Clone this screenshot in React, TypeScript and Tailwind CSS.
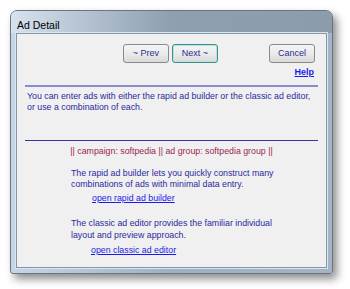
import React from 'react';

const font = { fontFamily: '"Liberation Sans", Arial, sans-serif' };

const WinButton = ({ label, focused = false }: { label: string; focused?: boolean }) => (
  <button
    className={`w-[46px] h-[19px] rounded-[3px] border text-[9px] leading-none text-[#2b2b8f] bg-gradient-to-b from-[#f4f4f4] via-[#ebebeb] to-[#d9d9d9] ${
      focused ? 'border-[#3e8e8a] shadow-[inset_0_0_0_1px_#b9e2e0]' : 'border-[#8a8a8a]'
    }`}
  >
    {label}
  </button>
);

export default function App() {
  return (
    <div className="w-[350px] h-[289px] bg-white overflow-hidden pt-[10px] pl-[10px]" style={font}>
      <div className="w-[323px] h-[264px] rounded-t-[7px] rounded-b-[3px] border border-[#6b7480] bg-gradient-to-r from-[#c7d6e4] via-[#9eb0c2] to-[#a5b4c4] shadow-[4px_5px_9px_rgba(0,0,0,0.45)] flex flex-col">
        {/* title bar */}
        <div className="h-[22px] shrink-0 flex items-end pb-[3px] pl-[6px] text-[10.5px] leading-none text-black bg-gradient-to-r from-[#d6e2ee] via-[#8f9fb0] to-[#8c9cad] rounded-t-[6px]">
          Ad Detail
        </div>
        {/* client */}
        <div className="flex-1 mx-[5px] mb-[5px] border border-[#8796a6] bg-[#f0f0f0] flex flex-col text-[8.8px] leading-[11.5px] text-[#2a2aa0] whitespace-nowrap shadow-[0_0_0_1px_#d6e6f4]">
          <div className="flex items-center pt-[10px] pl-[106px] pr-[11px]">
            <div className="flex gap-[3px]">
              <WinButton label="~ Prev" />
              <WinButton label="Next ~" focused />
            </div>
            <div className="ml-auto">
              <WinButton label="Cancel" />
            </div>
          </div>
          <div className="flex justify-end pr-[12px] mt-[4px]">
            <a className="text-[9px] font-bold text-[#1a1aee] underline">Help</a>
          </div>
          <div className="mx-[8px] mt-[6px] h-[2px] bg-[#8a8ace]" />
          <div className="mx-[10px] mt-[4px] leading-[11px]">
            You can enter ads with either the rapid ad builder or the classic ad editor,
            <br />
            or use a combination of each.
          </div>
          <div className="mx-[8px] mt-[27px] h-[1px] bg-[#3535a5]" />
          <div className="mt-[5px] text-center text-[#9b1f55] leading-[11px]">
            || campaign: softpedia || ad group: softpedia group ||
          </div>
          <div className="pl-[54px] mt-[11px]">
            The rapid ad builder lets you quickly construct many
            <br />
            combinations of ads with minimal data entry.
          </div>
          <div className="pl-[75px] mt-[2px]">
            <a className="text-[#1a1aee] underline">open rapid ad builder</a>
          </div>
          <div className="pl-[54px] mt-[14px]">
            The classic ad editor provides the familiar individual
            <br />
            layout and preview approach.
          </div>
          <div className="pl-[74px] mt-[4px]">
            <a className="text-[#1a1aee] underline">open classic ad editor</a>
          </div>
        </div>
      </div>
    </div>
  );
}
